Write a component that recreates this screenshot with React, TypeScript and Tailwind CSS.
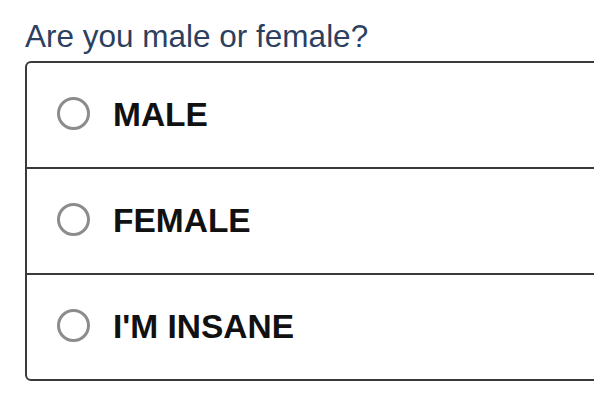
const options = ['MALE', 'FEMALE', "I'M INSANE"];

export default function App() {
  return (
    <div className="h-[408px] w-[594px] overflow-hidden bg-white pl-[25px] pt-[21px] font-['Liberation_Sans',Arial,sans-serif]">
      <h2 className="text-[31.5px] leading-none text-[#2d3f5f]">Are you male or female?</h2>
      <div className="mt-[8.5px] w-[640px] rounded-[6px] border-2 border-[#3a3a3a]">
        {options.map((label, i) => (
          <label
            key={label}
            className={`box-content flex h-[104px] items-center gap-[23px] pl-[30px] ${i > 0 ? 'border-t-2 border-[#3a3a3a]' : ''}`}
          >
            <span className="-mt-[3px] h-[33px] w-[33px] rounded-full border-[3px] border-[#8c8c8c]" />
            <span className="text-[33.5px] font-bold leading-none text-[#111]">{label}</span>
          </label>
        ))}
      </div>
    </div>
  );
}
